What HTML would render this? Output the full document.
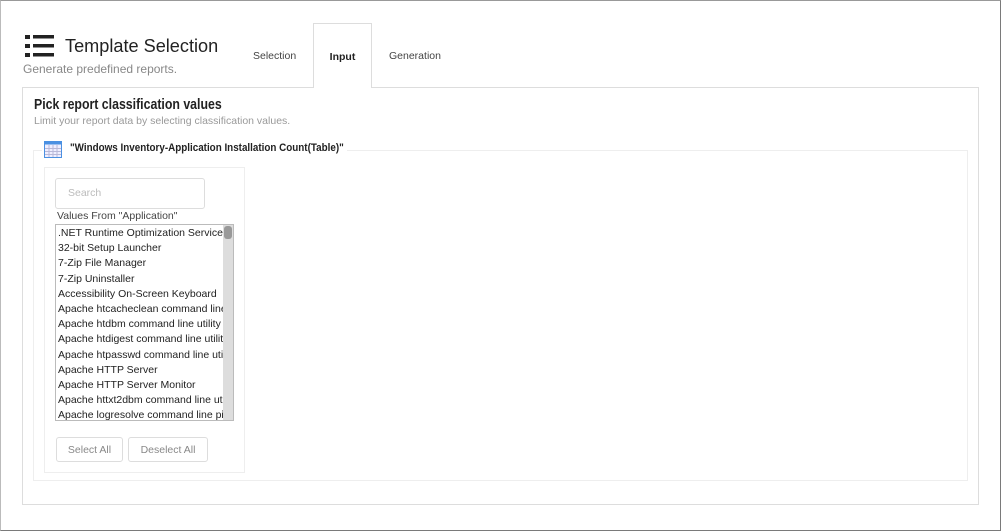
<!DOCTYPE html>
<html><head><meta charset="utf-8"><style>
*{box-sizing:border-box;margin:0;padding:0}
body{width:1001px;height:531px;background:#fff;font-family:"Liberation Sans",sans-serif;position:relative;overflow:hidden;color:#222}
.frame{position:absolute;left:0;top:0;width:1001px;height:531px;border:1px solid #7a7a7a;border-left-color:#bbb;border-top-color:#999}
.abs{position:absolute}
.title{left:65px;top:35px;font-size:18.5px;color:#222;transform:scaleX(0.98);transform-origin:left}
.sub{left:23px;top:62px;font-size:12px;color:#888}
.tab{top:50px;font-size:10.5px;color:#444}
.panel{left:22px;top:87px;width:957px;height:418px;border:1px solid #ddd;background:#fff}
.itab{left:313px;top:23px;width:59px;height:65px;border:1px solid #ddd;border-bottom:none;background:#fff;font-size:10.5px;font-weight:bold;text-align:center;padding-top:27px}
.fs{left:33px;top:150px;width:935px;height:331px;border:1px solid #eee}
.box{left:44px;top:167px;width:201px;height:306px;border:1px solid #eee}
.search{left:55px;top:178px;width:150px;height:31px;border:1px solid #ddd;border-radius:3px;font-size:10.5px;color:#bbb;padding:8px 0 0 12px}
.list{left:55px;top:224px;width:179px;height:197px;border:1px solid #bbb;overflow:hidden;font-size:10.5px;line-height:15.2px;padding:1px 0 0 2px;white-space:nowrap}
.sb{left:223px;top:225px;width:10px;height:195px;background:#ddd}
.th{left:224px;top:226px;width:8px;height:13px;background:#999;border-radius:3px}
.btn{top:437px;height:25px;border:1px solid #ddd;border-radius:3px;font-size:10.5px;color:#888;text-align:center;padding-top:6px}
</style></head><body>
<div class="frame"></div>
<svg class="abs" style="left:25px;top:35px" width="29" height="23" viewBox="0 0 29 23"><g fill="#222"><rect x="0" y="0" width="5" height="4"/><rect x="0" y="9" width="5" height="4"/><rect x="0" y="18" width="5" height="4"/><rect x="8" y="0" width="21" height="3.5"/><rect x="8" y="9" width="21" height="3.5"/><rect x="8" y="18" width="21" height="3.5"/></g></svg>
<div class="abs title">Template Selection</div>
<div class="abs sub">Generate predefined reports.</div>
<div class="abs panel"></div>
<div class="abs itab">Input</div>
<div class="abs tab" style="left:253px">Selection</div>
<div class="abs tab" style="left:389px">Generation</div>
<div class="abs" style="left:34px;top:97px;font-size:14.5px;font-weight:bold;color:#222;transform:scaleX(0.85);transform-origin:left">Pick report classification values</div>
<div class="abs" style="left:34px;top:115px;font-size:10.5px;color:#999">Limit your report data by selecting classification values.</div>
<div class="abs fs"></div>
<div class="abs" style="left:42px;top:140px;width:305px;height:18px;background:#fff"></div>
<svg class="abs" style="left:44px;top:141px" width="18" height="17" viewBox="0 0 18 17"><rect x="0.5" y="0.5" width="17" height="16" fill="#eef" stroke="#4a90e2"/><rect x="0.5" y="0.5" width="17" height="3" fill="#4a90e2"/><g stroke="#b8b8d8" stroke-width="1"><path d="M5 4v12M9 4v12M13 4v12M1 7.5h16M1 10.5h16M1 13.5h16"/></g></svg>
<div class="abs" style="left:70px;top:142px;font-size:11px;font-weight:bold;color:#222;transform:scaleX(0.895);transform-origin:left;white-space:nowrap">"Windows Inventory-Application Installation Count(Table)"</div>
<div class="abs box"></div>
<div class="abs search">Search</div>
<div class="abs" style="left:57px;top:210px;font-size:10.5px;color:#444">Values From "Application"</div>
<div class="abs list">.NET Runtime Optimization Service<br>32-bit Setup Launcher<br>7-Zip File Manager<br>7-Zip Uninstaller<br>Accessibility On-Screen Keyboard<br>Apache htcacheclean command line<br>Apache htdbm command line utility<br>Apache htdigest command line utility<br>Apache htpasswd command line utility<br>Apache HTTP Server<br>Apache HTTP Server Monitor<br>Apache httxt2dbm command line utility<br>Apache logresolve command line pipe</div>
<div class="abs sb"></div><div class="abs th"></div>
<div class="abs btn" style="left:56px;width:67px">Select All</div>
<div class="abs btn" style="left:128px;width:80px">Deselect All</div>
</body></html>
